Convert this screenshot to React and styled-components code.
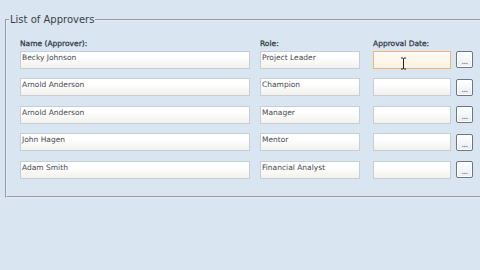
import React from 'react';
import styled, { createGlobalStyle } from 'styled-components';

const GlobalStyle = createGlobalStyle`
  html, body {
    margin: 0;
    padding: 0;
    background: #d9e6f2;
    overflow: hidden;
  }
  body {
    font-family: 'DejaVu Sans', 'Liberation Sans', sans-serif;
  }
`;

const Page = styled.div`
  width: 480px;
  height: 270px;
  position: relative;
  padding: 14px 0 0 5px;
  box-sizing: border-box;
`;

const Group = styled.fieldset`
  width: 490px;
  box-sizing: border-box;
  margin: 0;
  padding: 15px 0 16px 13px;
  border: 2px groove #e4edf5;
  border-right: none;
  height: 184px;
`;

const Legend = styled.legend`
  font-size: 10px;
  color: #3a3f45;
  padding: 0 1px;
  margin-left: -11px;
  line-height: 12px;
`;

const Grid = styled.div`
  display: grid;
  grid-template-columns: 230px 100px 81px 17px;
  column-gap: 10px;
  row-gap: 9.5px;
  align-items: center;

  & > :nth-child(4n + 3) {
    margin-left: 3px;
  }
  & > :nth-child(4n) {
    margin-left: -5px;
  }
`;

const Label = styled.div`
  font-size: 7.5px;
  color: #2e3741;
  -webkit-text-stroke: 0.25px #2e3741;
  margin-bottom: -8px;
  margin-top: -4px;
  line-height: 9px;
`;

const Field = styled.div`
  height: 18px;
  box-sizing: border-box;
  border: 1px solid ${(p) => (p.focused ? '#e9b77a' : '#c6ced8')};
  background: ${(p) =>
    p.focused
      ? 'linear-gradient(#fefbf4, #fbf1e2)'
      : 'linear-gradient(#ffffff 30%, #f3f1ed)'};
  font-size: 7.5px;
  color: #454a50;
  padding: 1px 1px;
  line-height: 10px;
  white-space: nowrap;
  overflow: hidden;
`;

const PickButton = styled.div`
  width: 17px;
  height: 17px;
  box-sizing: border-box;
  border: 1px solid #6b7784;
  border-radius: 2px;
  background: linear-gradient(#ffffff, #e8edf2);
  box-shadow: inset 0 0 0 1px #ffffff;
  font-size: 8px;
  color: #4a5562;
  display: flex;
  align-items: flex-end;
  justify-content: center;
  line-height: 10px;
  letter-spacing: -0.5px;
`;

const Cursor = styled.svg`
  position: absolute;
  left: 400px;
  top: 57px;
`;

const approvers = [
  { name: 'Becky Johnson', role: 'Project Leader', focused: true },
  { name: 'Arnold Anderson', role: 'Champion' },
  { name: 'Arnold Anderson', role: 'Manager' },
  { name: 'John Hagen', role: 'Mentor' },
  { name: 'Adam Smith', role: 'Financial Analyst' },
];

export default function App() {
  return (
    <Page>
      <GlobalStyle />
      <Group>
        <Legend>List of Approvers</Legend>
        <Grid>
          <Label>Name (Approver):</Label>
          <Label>Role:</Label>
          <Label>Approval Date:</Label>
          <span />
          {approvers.map((a, i) => (
            <React.Fragment key={i}>
              <Field>{a.name}</Field>
              <Field>{a.role}</Field>
              <Field focused={a.focused} />
              <PickButton>...</PickButton>
            </React.Fragment>
          ))}
        </Grid>
      </Group>
      <Cursor width="7" height="13" viewBox="0 0 7 13">
        <path d="M1 1h2l0.5 0.5L4 1h2M3.5 1.5v10M1 12h2l0.5-0.5L4 12h2" fill="none" stroke="#222" strokeWidth="1" />
      </Cursor>
    </Page>
  );
}
